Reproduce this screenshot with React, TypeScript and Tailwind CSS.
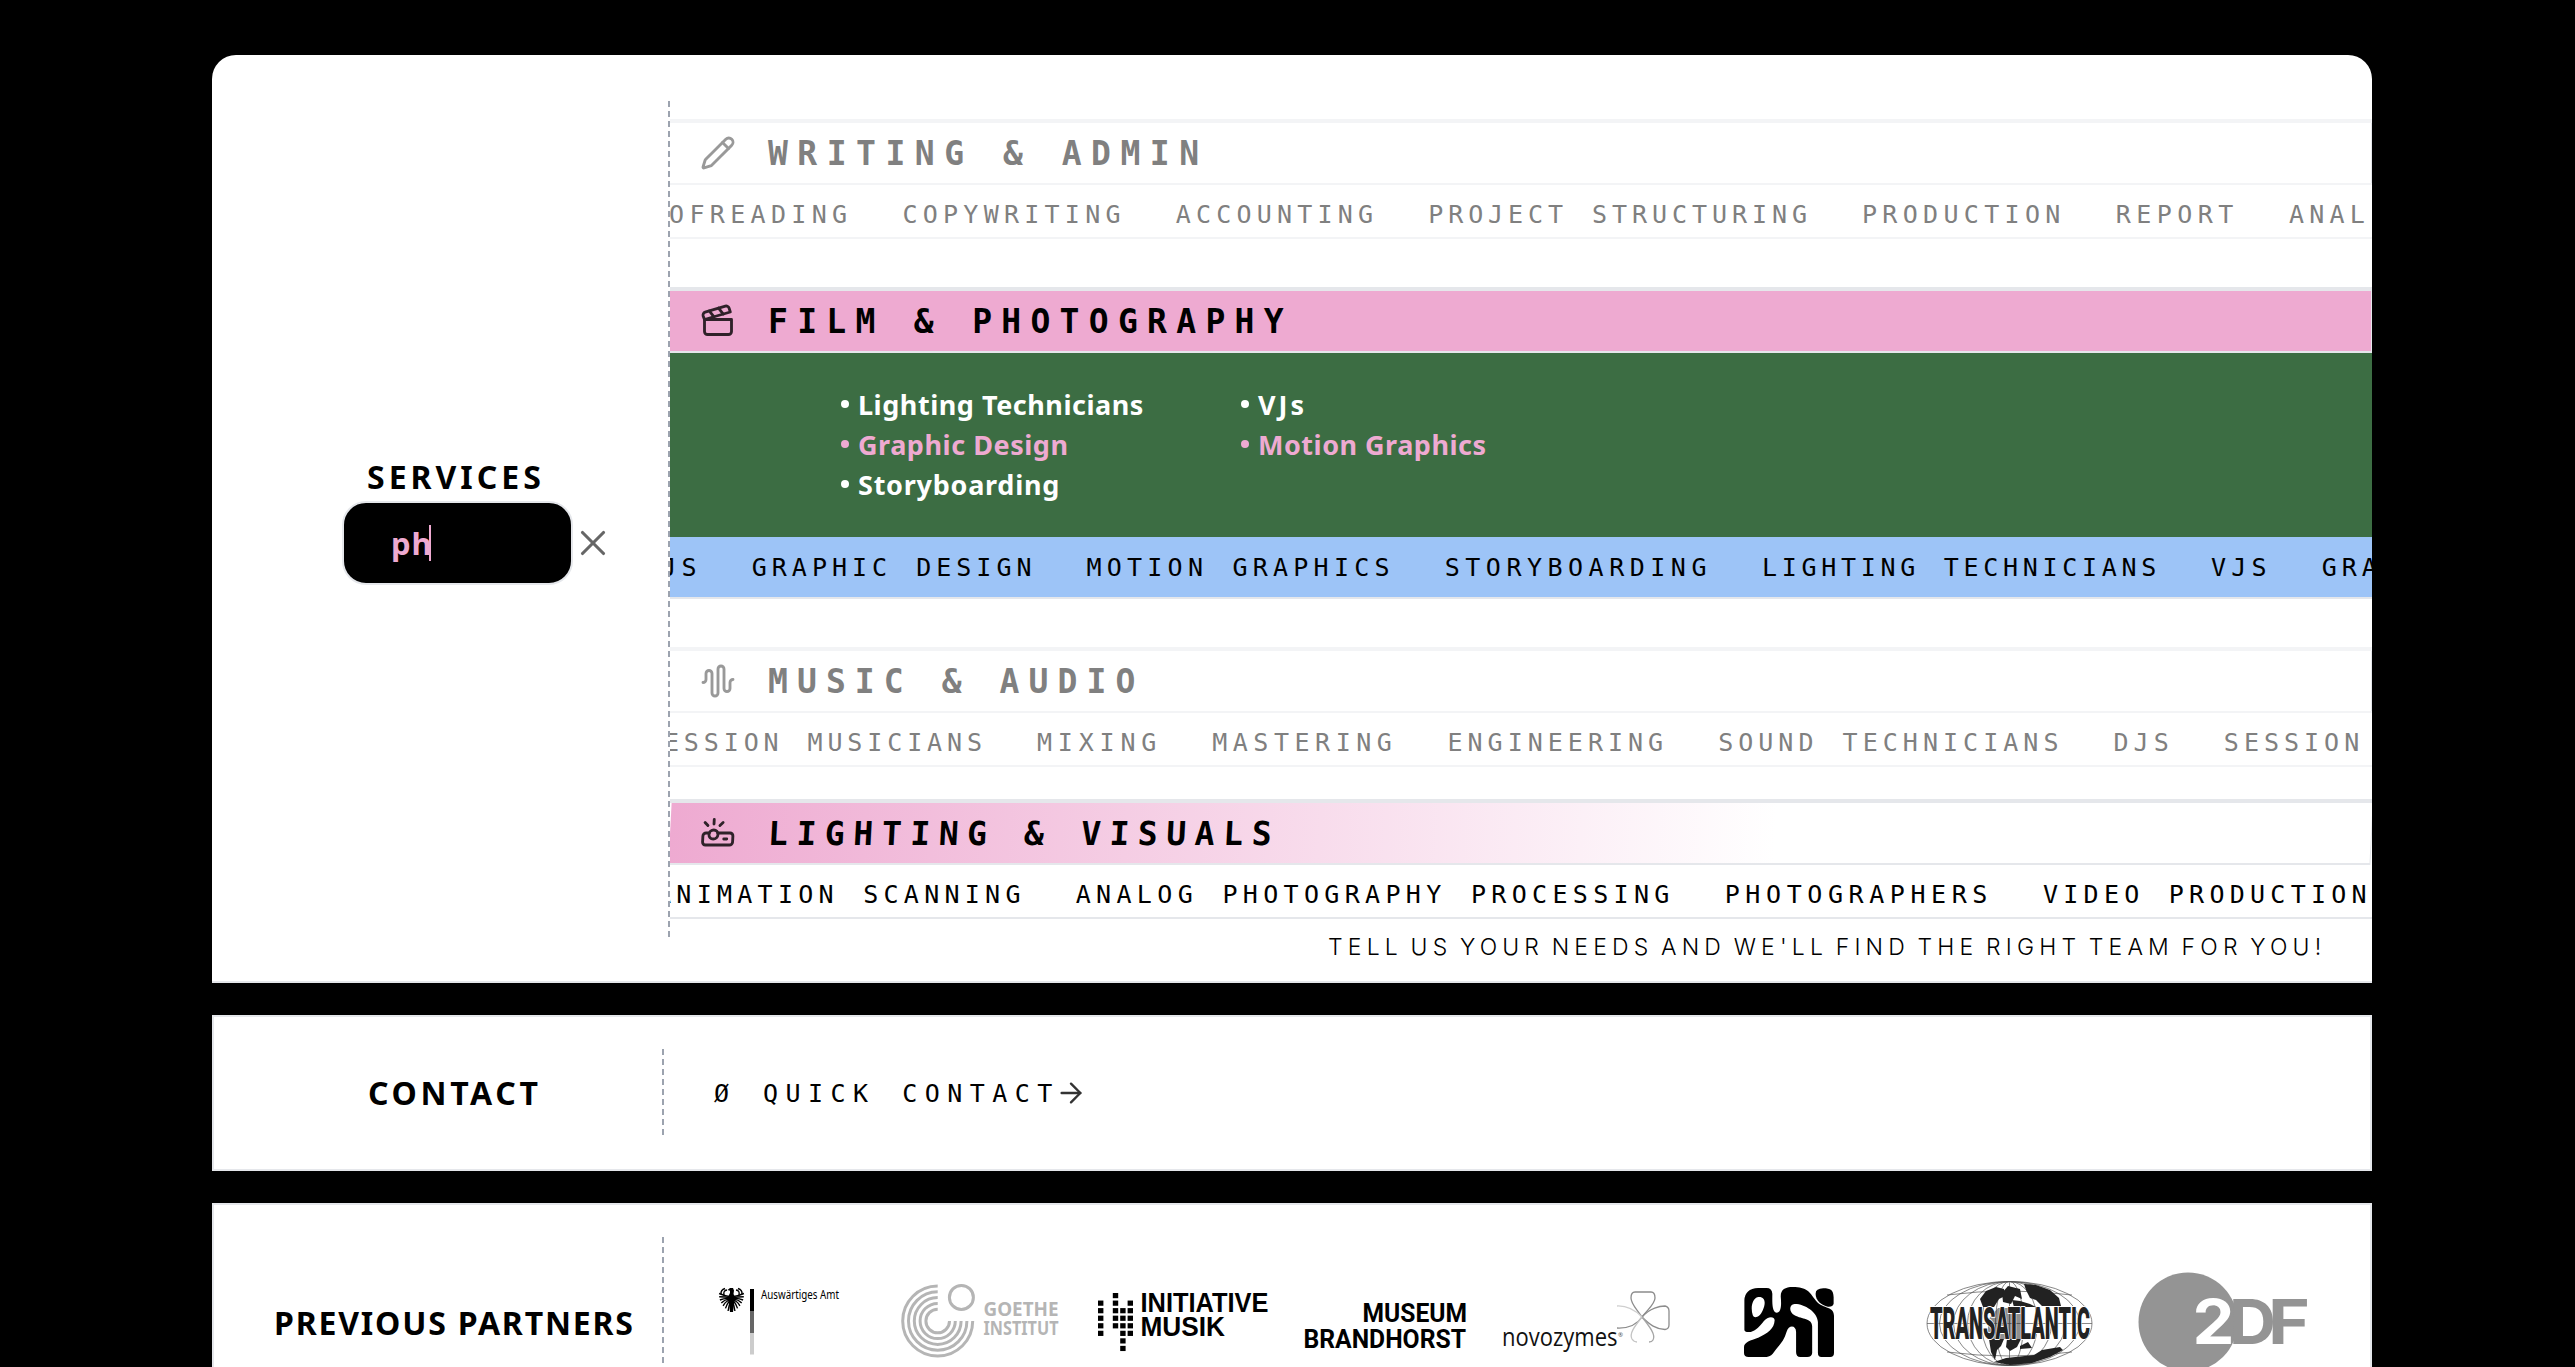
import React, { useLayoutEffect, useRef, useState } from "react";
import { ArrowRight, AudioWaveform, Clapperboard, Pencil, Projector, X } from "lucide-react";

/** Tracks a line of text out (or in) until its advance equals `width`. */
function Tracked({ text, width, trailing = false, className = "" }: { text: string; width: number; trailing?: boolean; className?: string }) {
  const ref = useRef<HTMLSpanElement>(null);
  const [spacing, setSpacing] = useState(0);
  useLayoutEffect(() => {
    const el = ref.current;
    if (!el) return;
    el.style.letterSpacing = "0px";
    const natural = el.offsetWidth;
    const value = (width - natural) / (trailing ? text.length : text.length - 1);
    el.style.letterSpacing = `${value}px`;
    setSpacing(value);
  }, [text, width, trailing]);
  return (
    <span ref={ref} className={`inline-block shrink-0 whitespace-pre ${className}`} style={{ letterSpacing: `${spacing}px` }}>
      {text}
    </span>
  );
}

type Item = [string, number];

function Marquee({ items, className }: { items: Item[]; className: string }) {
  return (
    <div className={`flex items-center gap-[50px] overflow-hidden font-['DejaVu_Sans_Mono',monospace] text-[25px] leading-none [word-spacing:4px] ${className}`}>
      {items.map(([text, width], i) => (
        <Tracked key={i} text={text} width={width} trailing />
      ))}
    </div>
  );
}

function Heading({ icon: Icon, text, width, className }: { icon: typeof Pencil; text: string; width: number; className: string }) {
  return (
    <div className={`flex h-[60px] items-center border-r border-gray-200 pl-[30px] ${className}`}>
      <Icon className="size-9 opacity-80" strokeWidth={1.9} />
      <Tracked
        text={text}
        width={width}
        className="ml-[32px] font-['DejaVu_Sans_Mono',monospace] text-[33px] leading-none font-bold"
      />
    </div>
  );
}

function DashLine({ className = "" }: { className?: string }) {
  return (
    <div
      className={`w-[2px] shrink-0 bg-[repeating-linear-gradient(to_bottom,#9ca3af_0px,#9ca3af_6px,transparent_6px,transparent_10px)] ${className}`}
    />
  );
}

function Bullet({ text, width, pink = false }: { text: string; width: number; pink?: boolean }) {
  return (
    <li className={`flex h-10 items-center ${pink ? "text-[#eeaad1]" : "text-white"}`}>
      <span className="mr-[9px] size-[8px] rounded-full bg-current" />
      <Tracked text={text} width={width} className="font-['Noto_Sans',sans-serif] text-[27px] leading-none font-bold" />
    </li>
  );
}

const writing: Item[] = [["OFREADING", 183], ["COPYWRITING", 223.7], ["ACCOUNTING", 202.9], ["PROJECT STRUCTURING", 383.8], ["PRODUCTION", 204.3], ["REPORT", 122.8], ["ANAL", 81]];
const film: Item[] = [["VJS", 60.6], ["GRAPHIC DESIGN", 285], ["MOTION GRAPHICS", 308.5], ["STORYBOARDING", 267.5], ["LIGHTING TECHNICIANS", 399], ["VJS", 60.6], ["GRAPHIC DESIGN", 285]];
const music: Item[] = [["SESSION MUSICIANS", 343], ["MIXING", 125], ["MASTERING", 184.8], ["ENGINEERING", 221.1], ["SOUND TECHNICIANS", 345.5], ["DJS", 60.2], ["SESSION", 140]];
const lighting: Item[] = [["ANIMATION SCANNING", 369.8], ["ANALOG PHOTOGRAPHY PROCESSING", 599.5], ["PHOTOGRAPHERS", 268.6], ["VIDEO PRODUCTION", 329]];

function Services() {
  return (
    <section className="flex h-[928px] rounded-t-[24px] border-b-2 border-gray-200 bg-white pt-[46px]">
      <div className="w-[456px] shrink-0 pt-[357px]">
        <div className="h-[43px] pl-[155px]">
          <Tracked text="SERVICES" width={174} className="font-['Noto_Sans',sans-serif] text-[32px] leading-[38px] font-bold" />
        </div>
        <div className="flex items-center pl-[130px]">
          <div className="flex h-[84px] w-[231px] shrink-0 items-center rounded-[24px] border-2 border-gray-200 bg-black pl-[47px]">
            <Tracked text="ph" width={41} className="font-['Noto_Sans',sans-serif] text-[31px] leading-none font-bold text-[#eeaad1]" />
            <span className="-ml-[4px] h-9 w-[2px] bg-[#eeaad1]" />
          </div>
          <X className="-ml-px size-[42px] text-[#666]" strokeWidth={1.8} />
        </div>
      </div>
      <DashLine className="h-[836px]" />
      <div className="min-w-0 grow overflow-hidden">
        <div className="mt-[18px] border-t-4 border-b-2 border-gray-100 text-[#808080]">
          <Heading icon={Pencil} text="WRITING & ADMIN" width={431} className="border-gray-100" />
          <Marquee items={writing} className="-ml-px h-[54px] border-t-2 border-gray-100 pt-[7px]" />
        </div>

        <div className="mt-12 border-t-4 border-b-2 border-gray-200">
          <Heading icon={Clapperboard} text="FILM & PHOTOGRAPHY" width={516} className="bg-[#eeaad1]" />
          <div className="flex h-[186px] border-t-2 border-gray-200 bg-[#3c6d43] pt-[31px] pl-[171px]">
            <ul className="w-[400px]">
              <Bullet text="Lighting Technicians" width={285} />
              <Bullet text="Graphic Design" width={210} pink />
              <Bullet text="Storyboarding" width={201} />
            </ul>
            <ul>
              <Bullet text="VJs" width={46} />
              <Bullet text="Motion Graphics" width={228} pink />
            </ul>
          </div>
          <div className="bg-[#9dc4f7]">
            <Marquee items={film} className="-ml-[29px] h-[60px]" />
          </div>
        </div>

        <div className="mt-12 border-t-4 border-b-2 border-gray-100 text-[#808080]">
          <Heading icon={AudioWaveform} text="MUSIC & AUDIO" width={367} className="border-gray-100" />
          <Marquee items={music} className="-ml-[26px] h-[54px] border-t-2 border-gray-100 pt-[7px]" />
        </div>

        <div className="mt-8 border-t-4 border-b-2 border-gray-200">
          <div className="-skew-x-3 border-b-2 border-gray-200">
            <Heading
              icon={Projector}
              text="LIGHTING & VISUALS"
              width={504}
              className="bg-[linear-gradient(to_right,#eeaad1,#ffffff_65%)]"
            />
          </div>
          <Marquee items={lighting} className="-ml-[14px] h-[52px] pt-[7px]" />
        </div>

        <div className="flex h-[56px] items-center pl-[658px]">
          <Tracked
            text={"TELL US YOUR NEEDS AND WE'LL FIND THE RIGHT TEAM FOR YOU!"}
            width={993}
            className="font-['Inter',sans-serif] text-[23px] leading-none font-light [word-spacing:-4px]"
          />
        </div>
      </div>
    </section>
  );
}

function Contact() {
  return (
    <section className="mt-8 flex h-[156px] items-start border-2 border-gray-200 bg-white pt-[32px]">
      <div className="flex h-[88px] w-[448px] shrink-0 items-center pl-[154px]">
        <Tracked text="CONTACT" width={170} className="font-['Noto_Sans',sans-serif] text-[32px] leading-none font-bold" />
      </div>
      <DashLine className="h-[88px]" />
      <div className="flex h-[88px] items-center pl-[50px]">
        <Tracked text="Ø QUICK CONTACT" width={346} trailing className="font-['DejaVu_Sans_Mono',monospace] text-[25px] leading-none [word-spacing:4px]" />
        <ArrowRight className="-ml-[5px] size-8 text-[#333]" strokeWidth={1.8} />
      </div>
    </section>
  );
}

function AmtLogo() {
  const tips = [
    [12.4, 1293.5],
    [12.3, 1296.8],
    [11.6, 1300],
    [10.2, 1303],
    [8.4, 1305.8],
    [6, 1308.4],
    [3.4, 1311],
  ];
  return (
    <svg className="h-[110px] w-[180px]" viewBox="700 1263 180 110">
      <g stroke="#000" strokeWidth="1.4" fill="none">
        {tips.map(([dx, y], i) => (
          <g key={y}>
            <path d={`M731.500 ${1297 + i * 0.9} Q${731.5 - dx * 0.55} ${1296 + i * 0.8} ${731.5 - dx} ${y}`} />
            <path d={`M731.500 ${1297 + i * 0.9} Q${731.5 + dx * 0.55} ${1296 + i * 0.8} ${731.5 + dx} ${y}`} />
          </g>
        ))}
        <path d="M725 1288.500 Q720.500 1290 721 1294 M727 1290 Q723 1290.500 724 1295 M738 1288.500 Q742.500 1290 742 1294 M736 1290 Q740 1290.500 739 1295" />
      </g>
      <path d="M727.500 1290 L730 1288 H733 L734 1290.500 L733.500 1294 L735 1297 L734 1304 L733 1312 H730 L729 1304 L728 1297 L730 1293 L730 1290.800Z" />
      <rect x="750" y="1289" width="4" height="22" fill="#000" />
      <rect x="750" y="1311" width="4" height="22" fill="#666" />
      <rect x="750" y="1333" width="4" height="21.500" fill="#ccc" />
      <text x="761" y="1299" fontFamily="Noto Sans" fontSize="12.500" textLength="78" lengthAdjust="spacingAndGlyphs">Auswärtiges Amt</text>
    </svg>
  );
}

function GoetheLogo() {
  const radii = [35, 29.2, 23.4, 17.6, 11.8];
  return (
    <svg className="h-[110px] w-[198px]" viewBox="880 1263 198 110">
      <g fill="none" stroke="#b5b5b5" strokeWidth="3">
        {radii.map((r) => (
          <path key={r} d={`M937.7 ${1321 - r} A${r} ${r} 0 1 0 ${937.7 + r} 1321`} />
        ))}
        <circle cx="961.4" cy="1297.400" r="12" />
      </g>
      <g fill="#b5b5b5" fontFamily="Noto Sans" fontWeight="700" fontSize="20">
        <text x="983.500" y="1316" textLength="75" lengthAdjust="spacingAndGlyphs">GOETHE</text>
        <text x="983.500" y="1335" textLength="75" lengthAdjust="spacingAndGlyphs">INSTITUT</text>
      </g>
    </svg>
  );
}

function InitiativeLogo() {
  const columns = [
    { x: 1098, from: 1, to: 5 },
    { x: 1112.8, from: 0, to: 4 },
    { x: 1120.2, from: 2, to: 7 },
    { x: 1127.6, from: 1, to: 5 },
  ];
  return (
    <svg className="h-[110px] w-[207px]" viewBox="1078 1263 207 110">
      {columns.map(({ x, from, to }) =>
        Array.from({ length: to - from + 1 }, (_, i) => (
          <rect key={`${x}-${i}`} x={x} y={1293 + (from + i) * 7.55} width="5.4" height="5.2" />
        )),
      )}
      <g fontFamily="Liberation Sans" fontWeight="700" fontSize="27">
        <text x="1140.500" y="1311.500" textLength="128" lengthAdjust="spacingAndGlyphs">INITIATIVE</text>
        <text x="1140.500" y="1336" textLength="84.500" lengthAdjust="spacingAndGlyphs">MUSIK</text>
      </g>
    </svg>
  );
}

function BrandhorstLogo() {
  return (
    <svg className="h-[110px] w-[200px]" viewBox="1285 1263 200 110">
      <g fontFamily="Roboto" fontWeight="700" fontSize="26">
        <text x="1362.500" y="1322" textLength="104.500" lengthAdjust="spacingAndGlyphs">MUSEUM</text>
        <text x="1303.500" y="1347.500" textLength="162.500" lengthAdjust="spacingAndGlyphs">BRANDHORST</text>
      </g>
    </svg>
  );
}

function NovozymesLogo() {
  return (
    <svg className="h-[110px] w-[215px]" viewBox="1485 1263 215 110">
      <text x="1502" y="1346" fontFamily="Open Sans" fontSize="25" fill="#111" textLength="115.500" lengthAdjust="spacingAndGlyphs">novozymes</text>
      <text x="1618" y="1337" fontFamily="Open Sans" fontSize="6" fill="#444">®</text>
      <g fill="none" stroke="#8c8c8c" strokeWidth="1.3">
        <path d="M1642 1317 C1636 1308 1631 1304 1631 1298 Q1631 1292 1635 1292 H1651 Q1655 1292 1655 1298 C1655 1304 1648 1309 1642 1317 C1636 1326 1628 1328.500 1617 1328" />
        <path d="M1642 1317 C1650 1308 1660 1306 1665 1306 Q1669 1307 1669 1311 V1325 Q1669 1329 1665 1329.500 C1656 1329 1650 1325 1642 1317" />
        <path d="M1642 1317 C1635 1310 1628 1305.500 1617 1306" stroke="#cfcfcf" />
        <path d="M1642 1317 C1650 1327 1656 1335 1653 1340 Q1652 1342 1649 1342" stroke="#a5a5a5" />
        <path d="M1642 1317 C1634 1327 1629 1334 1632 1339 Q1634 1342 1637 1342" stroke="#c4c4c4" />
      </g>
    </svg>
  );
}

function BlobLogo() {
  return (
    <div className="flex h-[110px] w-[180px] items-start pt-[23.500px] pl-[44px]">
      <svg className="h-[70px] w-[90px]" viewBox="1213 110 235 210" preserveAspectRatio="none">
        <path
          fillRule="evenodd"
          d="M1214 238 V150 Q1215 115 1250 113 H1272 Q1286 113 1287 130 C1287 150 1285 185 1298 187 C1310 187 1311 165 1309 140 C1308 118 1320 110 1340 110 C1378 110 1384 125 1398 147 C1415 178 1447 165 1448 196 V308 Q1448 320 1438 320 H1415 Q1406 320 1406 308 V215 C1405 185 1370 160 1345 161 C1330 163 1330 185 1345 195 C1365 208 1390 203 1391 228 V308 Q1390 320 1378 320 H1360 Q1349 320 1349 305 V245 C1349 225 1330 222 1324 245 C1317 275 1300 290 1288 310 Q1281 320 1265 320 H1225 Q1213 320 1213 308 V290 C1213 275 1230 270 1250 262 C1275 250 1292 235 1293 210 C1293 197 1275 197 1265 212 C1250 235 1235 247 1225 245 Q1214 245 1214 238 Z M1250 140 C1270 138 1270 160 1262 180 C1255 200 1240 207 1236 195 C1230 175 1233 145 1250 140Z"
        />
        <path d="M1400 130 Q1400 115 1420 114 C1440 114 1446 120 1447 140 V160 Q1445 170 1432 169 C1415 165 1400 150 1400 130Z" />
      </svg>
    </div>
  );
}

function TransatlanticLogo() {
  return (
    <svg className="h-[110px] w-[230px]" viewBox="1880 1263 230 110">
      <g fill="none" stroke="#555" strokeWidth="0.7">
        <ellipse cx="2009.500" cy="1323.500" rx="82.500" ry="42" />
        {[70, 56, 42, 28, 14].map((rx) => (
          <ellipse key={rx} cx="2009.500" cy="1323.500" rx={rx} ry="42" />
        ))}
        <path d="M2009.500 1281 V1365 M1927 1323.500 H2092 M1947 1295 Q2009 1287 2072 1295 M1947 1352 Q2009 1360 2072 1352" />
      </g>
      <g fill="#222">
        <path d="M1983 1307 L1980 1299 L1986 1291 L1996 1287 L2004 1289 L2005 1296 L1999 1299 L1994 1307Z" />
        <path d="M2002 1293 L2008 1286 L2020 1289 L2022 1299 L2015 1296 L2011 1304 L2003 1302Z" />
        <path d="M2024 1284 L2036 1285 L2050 1290 L2059 1298 L2061 1306 H2042 L2036 1300 L2030 1298 L2026 1290Z" />
        <path d="M2012 1300 L2020 1301 L2030 1304 L2036 1307 H2014Z" />
        <path d="M1989 1339 H2004 L2001 1346 L1997 1350 L1995 1360 L1991 1352Z" />
        <path d="M2007 1339 H2021 L2017 1347 L2010 1351 L2006 1347Z M2020 1346 L2028 1342 L2032 1348 L2020 1349Z" />
        <path d="M1994 1362 L2006 1358 L2034 1355 L2042 1350 L2060 1347 L2063 1350 L2050 1357 L2032 1363 L2010 1365Z" />
        <path d="M1998 1308 H2024 V1339 H1988 V1320Z" opacity="0.5" />
      </g>
      <text
        x="1930"
        y="1339"
        fontFamily="Roboto"
        fontWeight="900"
        fontSize="44"
        fill="#222"
        stroke="#fff"
        strokeWidth="2"
        paintOrder="stroke"
        textLength="160"
        lengthAdjust="spacingAndGlyphs"
      >
        TRANSATLANTIC
      </text>
    </svg>
  );
}

function ZdfLogo() {
  return (
    <svg className="h-[110px] w-[220px]" viewBox="2110 1263 220 110">
      <circle cx="2188" cy="1322" r="49.500" fill="#949494" />
      <g fontFamily="Inter" fontWeight="700" fontSize="61.500">
        <text x="2192.500" y="1344" fill="#fff" textLength="42" lengthAdjust="spacingAndGlyphs">2</text>
        <text x="2229" y="1344" fill="#949494" textLength="47" lengthAdjust="spacingAndGlyphs">D</text>
        <text x="2268" y="1344" fill="#949494" textLength="42" lengthAdjust="spacingAndGlyphs">F</text>
      </g>
    </svg>
  );
}

function Partners() {
  return (
    <section className="mt-8 flex h-[240px] items-start border-2 border-gray-200 bg-white pt-[32px]">
      <div className="flex h-[172px] w-[448px] shrink-0 items-center pl-[60px]">
        <Tracked text="PREVIOUS PARTNERS" width={359} className="font-['Noto_Sans',sans-serif] text-[32px] leading-none font-bold" />
      </div>
      <DashLine className="h-[172px]" />
      <div className="flex pt-[26px] pl-[36px]">
        <AmtLogo />
        <GoetheLogo />
        <InitiativeLogo />
        <BrandhorstLogo />
        <NovozymesLogo />
        <BlobLogo />
        <TransatlanticLogo />
        <ZdfLogo />
      </div>
    </section>
  );
}

export default function App() {
  return (
    <div className="h-[1367px] w-[2575px] overflow-hidden bg-black text-black">
      <main className="ml-[212px] flex w-[2160px] flex-col pt-[55px]">
        <Services />
        <Contact />
        <Partners />
      </main>
    </div>
  );
}
